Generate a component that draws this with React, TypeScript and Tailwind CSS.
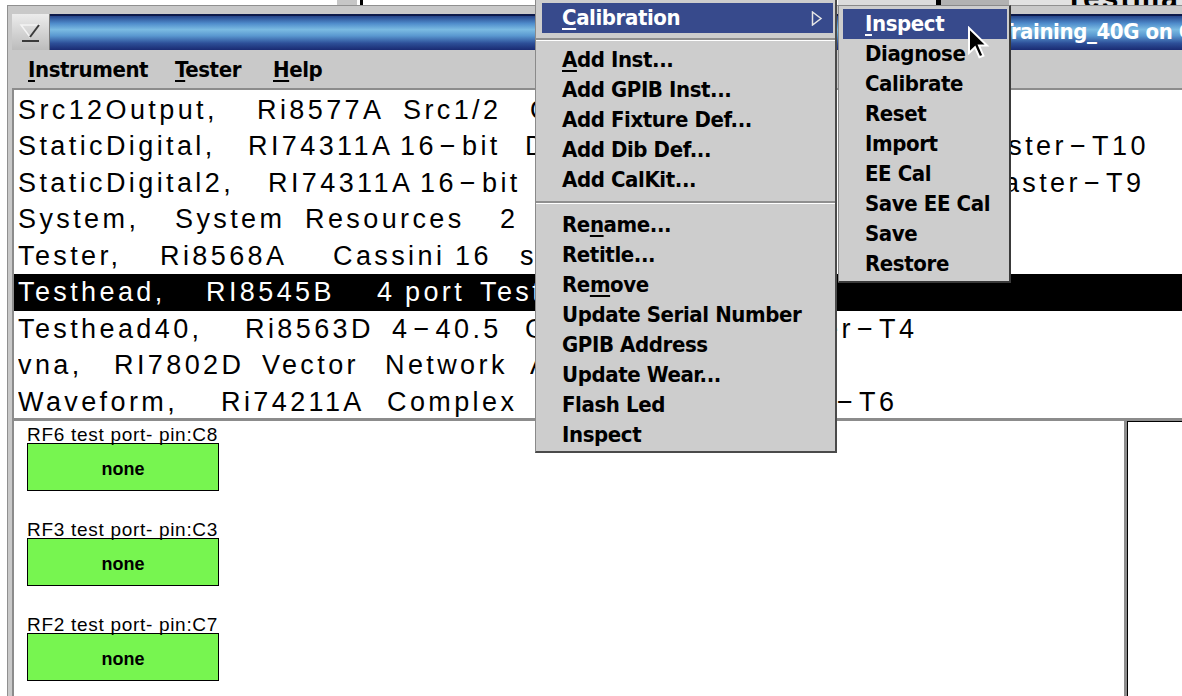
import React from "react";

type Cell = [number, string];

// list rows: each cell starts at a fixed column (page x)
const rows: { cells: Cell[]; sel?: boolean }[] = [
  { cells: [[18, "Src12Output,"], [257, "Ri8577A"], [403, "Src1/2"], [530, "Output"]] },
  { cells: [[18, "StaticDigital,"], [248, "RI74311A"], [400, "16-bit"], [525, "Digital I/O,"], [964, "Master-T10"]] },
  { cells: [[18, "StaticDigital2,"], [268, "RI74311A"], [420, "16-bit"], [545, "Digital I/O,"], [978, "Master-T9"]] },
  { cells: [[18, "System,"], [175, "System"], [305, "Resources"], [500, "2"]] },
  { cells: [[18, "Tester,"], [160, "Ri8568A"], [333, "Cassini"], [455, "16"], [520, "slot"]] },
  { cells: [[18, "Testhead,"], [206, "RI8545B"], [377, "4"], [405, "port"], [480, "Test Head"]], sel: true },
  { cells: [[18, "Testhead40,"], [245, "Ri8563D"], [392, "4-40.5"], [525, "GHz"], [760, "Tester-T4"]] },
  { cells: [[18, "vna,"], [114, "RI7802D"], [262, "Vector"], [385, "Network"], [530, "Analyzer"]] },
  { cells: [[18, "Waveform,"], [221, "Ri74211A"], [387, "Complex"], [740, "Tester-T6"]] },
];

const ports = [
  { label: "RF6 test port- pin:C8" },
  { label: "RF3 test port- pin:C3" },
  { label: "RF2 test port- pin:C7" },
];

const MENU_FONT = "font-['DejaVu_Sans_Condensed','DejaVu_Sans',sans-serif] font-stretch-condensed font-bold text-[22px] tracking-[-0.4px]";
const LIST_FONT = "font-['Liberation_Sans',Arial,sans-serif] text-[27px] tracking-[3.4px]";

// the list font draws its dashes long, with room either side
function withDashes(t: string) {
  const parts = t.split("-");
  return parts.map((p, i) => (
    <React.Fragment key={i}>
      {i > 0 && <span className="mx-[3px]">{"\u2212"}</span>}
      {p}
    </React.Fragment>
  ));
}

function ListRow({ cells, sel }: { cells: Cell[]; sel?: boolean }) {
  return (
    <div className={`flex h-[36.5px] leading-[36.5px] whitespace-pre pl-[4px] ${sel ? "bg-black text-white" : "text-black"}`}>
      {cells.map(([x, t], i) => {
        const next = cells[i + 1];
        return (
          <span key={i} className="shrink-0 overflow-hidden" style={next ? { width: next[0] - x } : undefined}>
            {withDashes(t)}
          </span>
        );
      })}
    </div>
  );
}

function Mn({ children }: { children: React.ReactNode }) {
  return <span className="underline underline-offset-[3px] decoration-[1.5px]">{children}</span>;
}

function Item({ children, hi }: { children: React.ReactNode; hi?: boolean }) {
  return (
    <div className={`h-[30px] leading-[30px] flex items-center ${hi ? "bg-[#374a8c] text-white" : "text-black"}`}>
      {children}
    </div>
  );
}

function Sep({ h }: { h: string }) {
  return (
    <div className={`${h} flex flex-col justify-center`}>
      <div className="h-[2px] bg-[#8f8f8f]" />
      <div className="h-[1px] bg-white" />
    </div>
  );
}

function CollapseIcon() {
  return (
    <svg width="24" height="20" viewBox="0 0 24 20">
      <path d="M2 2 L20 2 L11 14 Z" fill="none" stroke="#f4f4f4" strokeWidth="1.5" />
      <path d="M20 2 L11 14" stroke="#3a3a3a" strokeWidth="2" />
      <path d="M3 18 L20 18" stroke="#3a3a3a" strokeWidth="2" />
    </svg>
  );
}

function Cursor() {
  return (
    <svg width="24" height="34" viewBox="0 0 12 17">
      <path d="M1 1 L1 13.5 L4 10.6 L6.2 15.6 L8.2 14.8 L6 9.8 L10 9.8 Z" fill="#000" stroke="#fff" strokeWidth="1" strokeLinejoin="miter" />
    </svg>
  );
}

export default function App() {
  return (
    <div className="relative w-[1182px] h-[696px] overflow-hidden bg-white flex flex-col">
      {/* controls of the window behind */}
      <div className="h-[5px] flex shrink-0">
        <div className="w-[337px]" />
        <div className="w-[20px] bg-[#c6c6c6]" />
        <div className="w-[3px]" />
        <div className="w-[3px] bg-black" />
        <div className="w-[475px]" />
        <div className="w-[98px] bg-[#dcdcdc]" />
        <div className="w-[5px] bg-black" />
        <div className="w-[68px] bg-[#b2b2b2]" />
        <div className="flex-1 bg-[#e2e2e2] flex items-end pl-[56px] overflow-hidden">
          <span className="font-['Liberation_Sans',Arial,sans-serif] font-bold text-[30px] leading-none -mb-[8px] tracking-[2px] text-black">Testma</span>
        </div>
      </div>

      {/* window */}
      <div className="flex-1 min-h-0 flex flex-col ml-[7px] border-l border-t border-[#909090] bg-[#c9c9c9] pl-[4px]">
        <div className="pt-[8px] flex h-[44px] shrink-0">
          <div className="w-[38px] h-[36px] bg-[linear-gradient(to_bottom,#ececec,#bcbcbc)] border-r border-[#7a7a7a] flex items-center justify-center pt-[2px]">
            <CollapseIcon />
          </div>
          <div className="flex-1 h-[36px] border-t-2 border-[#0d1a4a] bg-[linear-gradient(to_bottom,#25448a,#4f8ccb_22%,#7bbbe2_40%,#5a98d0_58%,#2d4f98_80%,#1a2b72)] overflow-hidden whitespace-nowrap pl-[950px]">
            <span className={`${MENU_FONT} text-white leading-[32px]`}>Training_40G on CAL2</span>
          </div>
        </div>

        <div className={`h-[38px] shrink-0 flex items-center pl-[16px] ${MENU_FONT}`}>
          <span className="w-[147px]"><Mn>I</Mn>nstrument</span>
          <span className="w-[98px]"><Mn>T</Mn>ester</span>
          <span><Mn>H</Mn>elp</span>
        </div>

        <div className={`h-[333px] shrink-0 bg-white border-t-2 border-l-2 border-b-[3px] border-[#8c8c8c] pt-[1.5px] overflow-hidden ${LIST_FONT}`}>
          {rows.map((r, i) => (
            <ListRow key={i} cells={r.cells} sel={r.sel} />
          ))}
        </div>

        <div className="flex-1 min-h-0 flex">
          <div className="flex-1 bg-white border-l-2 border-[#8c8c8c] pt-[5px] pl-[13px]">
            {ports.map((p, i) => (
              <div key={i} className="mb-[30px] w-[192px]">
                <div className="h-[17px] leading-[17px] font-['Liberation_Sans',Arial,sans-serif] text-[19px] tracking-[0.7px] text-black whitespace-nowrap">
                  {p.label}
                </div>
                <div className="h-[48px] bg-[#77f550] border border-black flex justify-center pt-[16px]">
                  <span className="font-['Liberation_Sans',Arial,sans-serif] font-bold text-[18px] leading-[18px] text-black">none</span>
                </div>
              </div>
            ))}
          </div>
          <div className="w-[3px] bg-[#8c8c8c]" />
          <div className="w-[55px] bg-white border-l border-t border-black" />
        </div>
      </div>

      {/* Instrument > menu, opened */}
      <div className={`absolute left-[535px] top-0 w-[302px] bg-[#cdcdcd] border-l border-[#8a8a8a] border-r-2 border-b-2 border-r-[#4a4a4a] border-b-[#4a4a4a] pt-[3px] pb-[1px] ${MENU_FONT}`}>
        <div className="pl-[6px] pr-[2px]">
          <Item hi>
            <span className="pl-[20px]"><Mn>C</Mn>alibration</span>
            <svg className="ml-auto mr-[10px]" width="12" height="15" viewBox="0 0 12 15">
              <path d="M1.5 1 L10 7.5 L1.5 14 Z" fill="none" stroke="#e6e6e6" strokeWidth="1.5" />
            </svg>
          </Item>
        </div>
        <Sep h="h-[12px]" />
        <div className="pl-[26px]">
          <Item><span><Mn>A</Mn>dd Inst...</span></Item>
          <Item>Add GPIB Inst...</Item>
          <Item>Add Fixture Def...</Item>
          <Item>Add Dib Def...</Item>
          <Item>Add CalKit...</Item>
        </div>
        <Sep h="h-[15px]" />
        <div className="pl-[26px]">
          <Item><span>Re<Mn>n</Mn>ame...</span></Item>
          <Item>Retitle...</Item>
          <Item><span>Re<Mn>m</Mn>ove</span></Item>
          <Item>Update Serial Number</Item>
          <Item>GPIB Address</Item>
          <Item>Update Wear...</Item>
          <Item>Flash Led</Item>
          <Item>Inspect</Item>
        </div>
      </div>

      {/* Calibration submenu */}
      <div className={`absolute left-[838px] top-[5px] w-[173px] bg-[#cdcdcd] border-l border-t border-[#8a8a8a] border-r-2 border-b-2 border-r-[#3a3a3a] border-b-[#3a3a3a] pt-[3px] pb-[2px] pl-[4px] pr-[2px] ${MENU_FONT}`}>
        <Item hi><span className="pl-[22px]"><Mn>I</Mn>nspect</span></Item>
        {["Diagnose", "Calibrate", "Reset", "Import", "EE Cal", "Save EE Cal", "Save", "Restore"].map((t) => (
          <Item key={t}><span className="pl-[22px]">{t}</span></Item>
        ))}
      </div>

      <div className="absolute left-[967px] top-[26px]">
        <Cursor />
      </div>
    </div>
  );
}
